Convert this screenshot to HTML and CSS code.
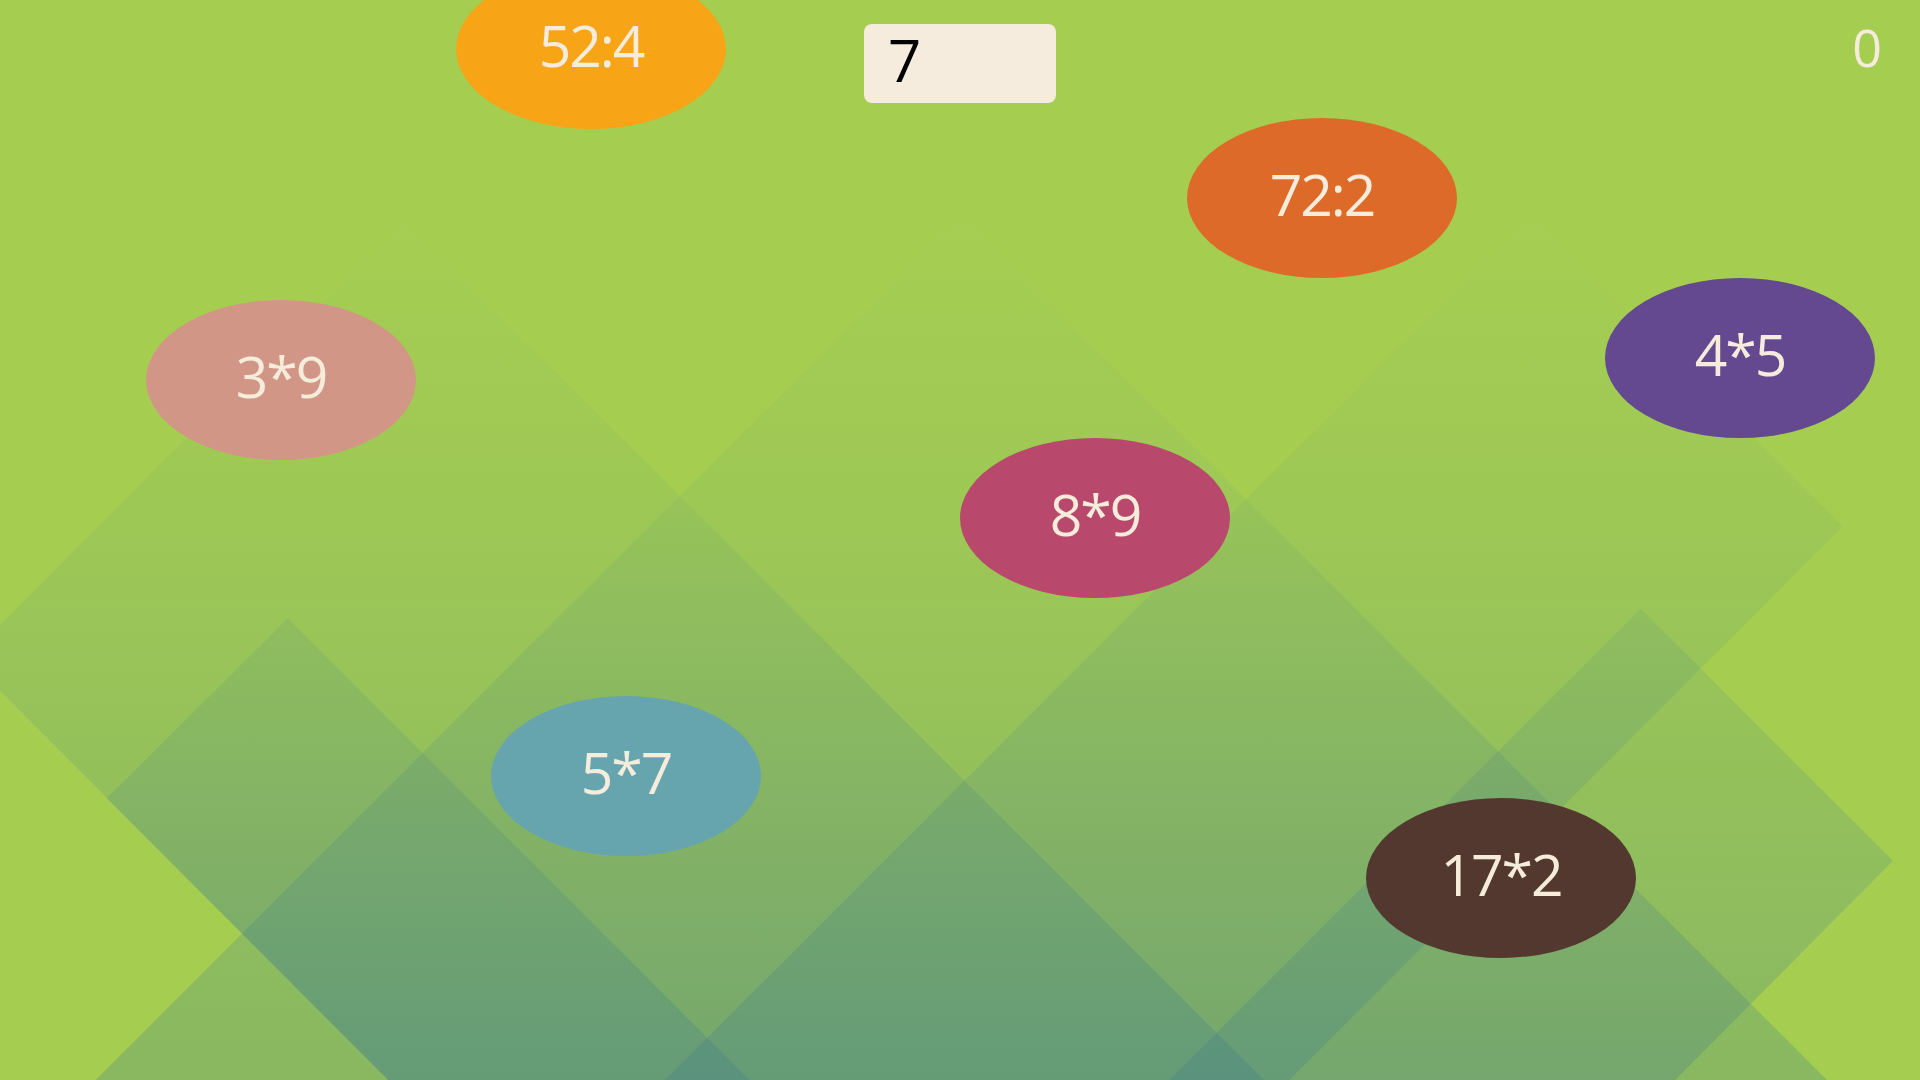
FILE: index.html
```html
<!DOCTYPE html>
<html lang="en">
<head>
<meta charset="utf-8">
<title>Math Bubbles</title>
<link rel="stylesheet" href="styles.css">
</head>
<body>
<div class="game">
  <svg class="bg" viewBox="0 0 1568 882" preserveAspectRatio="none" aria-hidden="true">
    <defs>
      <linearGradient id="shade" gradientUnits="userSpaceOnUse" x1="0" y1="170" x2="0" y2="882">
        <stop offset="0" stop-color="#3a7890" stop-opacity="0"/>
        <stop offset="0.35" stop-color="#3a7890" stop-opacity="0.07"/>
        <stop offset="1" stop-color="#3a7890" stop-opacity="0.26"/>
      </linearGradient>
    </defs>
    <polygon fill="url(#shade)" points="785,175 1492,882 78,882"/>
    <polygon fill="url(#shade)" points="330,180 1032,882 317,882 -27,537"/>
    <polygon fill="url(#shade)" points="1250,175 1505,430 1053,882 543,882"/>
    <polygon fill="url(#shade)" points="235,505 612,882 317,882 87,652"/>
    <polygon fill="url(#shade)" points="1340,497 1546,703 1368,882 955,882"/>
  </svg>

  <div class="bubble orange" style="left:456px;top:-31px">52:4</div>
  <div class="bubble rust" style="left:1187px;top:118px">72:2</div>
  <div class="bubble salmon" style="left:146px;top:300px">3*9</div>
  <div class="bubble purple" style="left:1605px;top:278px">4*5</div>
  <div class="bubble rose" style="left:960px;top:438px">8*9</div>
  <div class="bubble teal" style="left:491px;top:696px">5*7</div>
  <div class="bubble brown" style="left:1366px;top:798px">17*2</div>

  <div class="answer">7</div>
  <div class="score">0</div>
</div>
</body>
</html>
```

FILE: styles.css
```css
html, body {
  margin: 0;
  padding: 0;
  width: 1920px;
  height: 1080px;
  overflow: hidden;
}

body {
  font-family: "Open Sans", "Noto Sans", sans-serif;
  background: #a5ce51;
}

.game {
  position: relative;
  width: 1920px;
  height: 1080px;
  overflow: hidden;
  background: #a5ce51;
}

.bg {
  position: absolute;
  left: 0;
  top: 0;
  width: 1920px;
  height: 1080px;
}

.bubble {
  position: absolute;
  width: 270px;
  height: 160px;
  border-radius: 50%;
  display: flex;
  align-items: center;
  justify-content: center;
  box-sizing: border-box;
  padding-bottom: 8px;
  color: #f5ecdc;
  font-size: 57px;
  letter-spacing: -2px;
  line-height: 1;
}

.orange { background: #f7a416; }
.rust { background: #dd6a29; }
.salmon { background: #d29686; }
.purple { background: #644890; }
.rose { background: #b8486c; }
.teal { background: #66a5ae; }
.brown { background: #533830; }

.answer {
  position: absolute;
  left: 864px;
  top: 24px;
  width: 192px;
  height: 79px;
  box-sizing: border-box;
  padding-left: 24px;
  background: #f5ecdd;
  border-radius: 8px;
  color: #000;
  font-size: 58px;
  line-height: 72px;
}

.score {
  position: absolute;
  right: 38px;
  top: 21px;
  color: #f5ecdc;
  font-size: 52px;
  line-height: 1;
}
```
